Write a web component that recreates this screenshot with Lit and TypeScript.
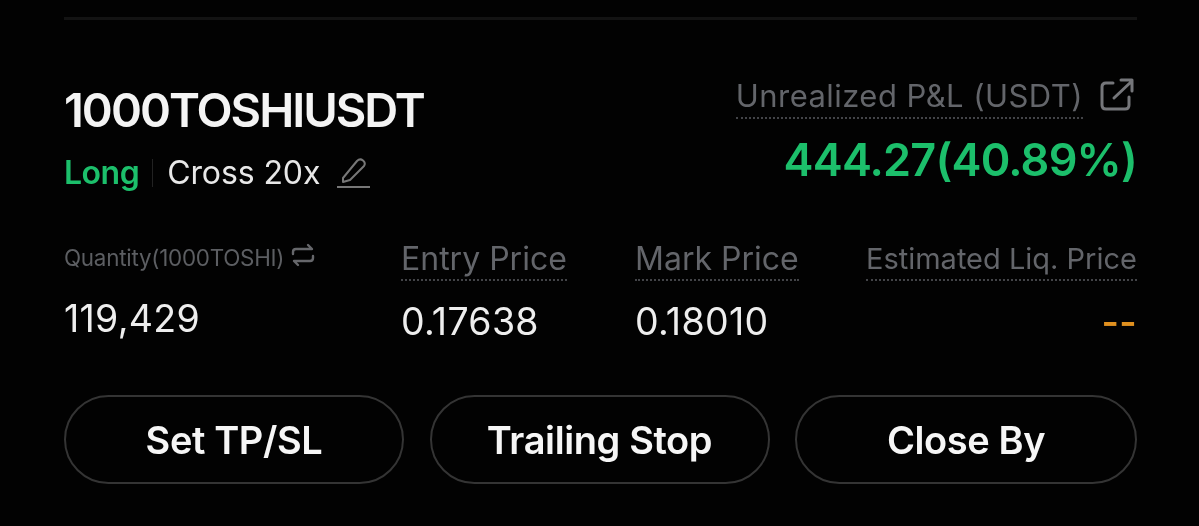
import { LitElement, html, css } from 'lit';
import { customElement } from 'lit/decorators.js';

// position card, values are static as in the capture
const STATS = [
  { label: 'Entry Price', value: '0.17638' },
  { label: 'Mark Price', value: '0.18010' },
];

const BUTTONS = ['Set TP/SL', 'Trailing Stop', 'Close By'];

@customElement('app-root')
export class AppRoot extends LitElement {
  static styles = css`
    :host {
      display: block;
      height: 526px;
      overflow: hidden;
      background: #020202;
      font-family: Inter, 'Liberation Sans', sans-serif;
      color: #f4f4f4;
    }

    /* the capture is an upscaled phone shot, everything in it is a bit soft */
    .card {
      padding: 17px 62px 0 64px;
      filter: blur(0.6px);
    }

    .divider {
      height: 3px;
      background: #131313;
    }

    .header {
      display: flex;
      justify-content: space-between;
      margin-top: 57px;
      height: 163px;
    }

    .title-block {
      padding-top: 6px;
    }

    .symbol {
      font-size: 47px;
      line-height: 54px;
      font-weight: 600;
      letter-spacing: -2px;
    }

    .meta {
      display: flex;
      align-items: center;
      margin-top: 17px;
      font-size: 32px;
      line-height: 38px;
    }

    .side {
      color: #1cbf6b;
      font-weight: 600;
      letter-spacing: -0.5px;
    }

    .sep {
      width: 1px;
      height: 28px;
      margin: 0 14px 0 13px;
      background: #222;
    }

    .margin {
      letter-spacing: -0.1px;
      color: #e8e8e8;
    }

    .edit {
      width: 36px;
      height: 36px;
      margin-left: 15px;
      color: #777;
    }

    .pnl {
      display: flex;
      flex-direction: column;
      align-items: flex-end;
    }

    .pnl-head {
      display: flex;
      align-items: flex-start;
      gap: 16px;
      padding-right: 2px;
    }

    .dotted {
      color: #63656a;
      border-bottom: 2px dotted #434448;
    }

    .pnl-label {
      font-size: 31px;
      line-height: 38px;
      padding-bottom: 2px;
      letter-spacing: 0.45px;
    }

    .share {
      width: 36px;
      height: 36px;
      color: #75767a;
    }

    .pnl-value {
      margin-top: 14px;
      font-size: 45px;
      line-height: 54px;
      font-weight: 600;
      color: #1cbf6b;
      letter-spacing: -0.8px;
    }

    .stats {
      display: grid;
      grid-template-columns: 337px 234px 1fr auto;
      height: 155px;
    }

    .stat {
      display: flex;
      flex-direction: column;
      align-items: flex-start;
    }

    .stat.end {
      align-items: flex-end;
    }

    .stat-label {
      font-size: 32px;
      line-height: 38px;
      padding-bottom: 1px;
    }

    .stat-label.small {
      font-size: 29px;
    }

    .qty-label {
      display: flex;
      align-items: center;
      gap: 7px;
      height: 34px;
      font-size: 22.4px;
      color: #5c5e62;
      letter-spacing: -0.25px;
    }

    .swap {
      width: 24px;
      height: 24px;
      margin-top: -4px;
      color: #66676b;
    }

    .value {
      margin-top: 20px;
      font-size: 37.5px;
      line-height: 42px;
      letter-spacing: 0.3px;
      color: #eee;
    }

    .value.qty {
      margin-top: 24px;
    }

    .none {
      font-weight: 600;
      color: #e0901f;
    }

    .actions {
      display: grid;
      grid-template-columns: 340fr 340fr 342fr;
      gap: 25.5px;
    }

    .btn {
      height: 89px;
      box-sizing: border-box;
      display: flex;
      align-items: center;
      justify-content: center;
      border: 2px solid #343434;
      border-radius: 45px;
      font-size: 38px;
      font-weight: 600;
      letter-spacing: -0.4px;
      color: #f6f6f6;
    }
  `;

  render() {
    return html`
      <div class="card">
        <div class="divider"></div>

        <div class="header">
          <div class="title-block">
            <div class="symbol">1000TOSHIUSDT</div>
            <div class="meta">
              <span class="side">Long</span>
              <span class="sep"></span>
              <span class="margin">Cross 20x</span>
              <svg class="edit" viewBox="0 0 36 36" fill="none" stroke="currentColor" stroke-width="2">
                <path d="M8 23 L22 6 Q25 3 28 5.500 Q31 8 29 11 L15 25 L8 27 Z" stroke-linejoin="round" />
                <path d="M2 32 H35" />
              </svg>
            </div>
          </div>
          <div class="pnl">
            <div class="pnl-head">
              <span class="pnl-label dotted">Unrealized P&amp;L (USDT)</span>
              <svg class="share" viewBox="0 0 36 36" fill="none" stroke="currentColor" stroke-width="3" stroke-linecap="round" stroke-linejoin="round">
                <path d="M14 6 H7 Q3 6 3 10 V28 Q3 32 7 32 H26 Q30 32 30 28 V20" />
                <path d="M15 21 L33 4 M22 3 H33 V14" />
              </svg>
            </div>
            <div class="pnl-value">444.27(40.89%)</div>
          </div>
        </div>

        <div class="stats">
          <div class="stat">
            <div class="qty-label">
              Quantity(1000TOSHI)
              <svg class="swap" viewBox="0 0 24 24" fill="none" stroke="currentColor" stroke-width="2.400" stroke-linecap="round" stroke-linejoin="round">
                <path d="M2 11 V9 Q2 6 5 6 H21 L17 2" />
                <path d="M22 13 V15 Q22 18 19 18 H3 L7 22" />
              </svg>
            </div>
            <div class="value qty">119,429</div>
          </div>
          ${STATS.map(
            (s) => html`
              <div class="stat">
                <div class="stat-label dotted">${s.label}</div>
                <div class="value">${s.value}</div>
              </div>
            `
          )}
          <div class="stat end">
            <div class="stat-label small dotted">Estimated Liq. Price</div>
            <div class="value none">--</div>
          </div>
        </div>

        <div class="actions">
          ${BUTTONS.map((b) => html`<div class="btn">${b}</div>`)}
        </div>
      </div>
    `;
  }
}
